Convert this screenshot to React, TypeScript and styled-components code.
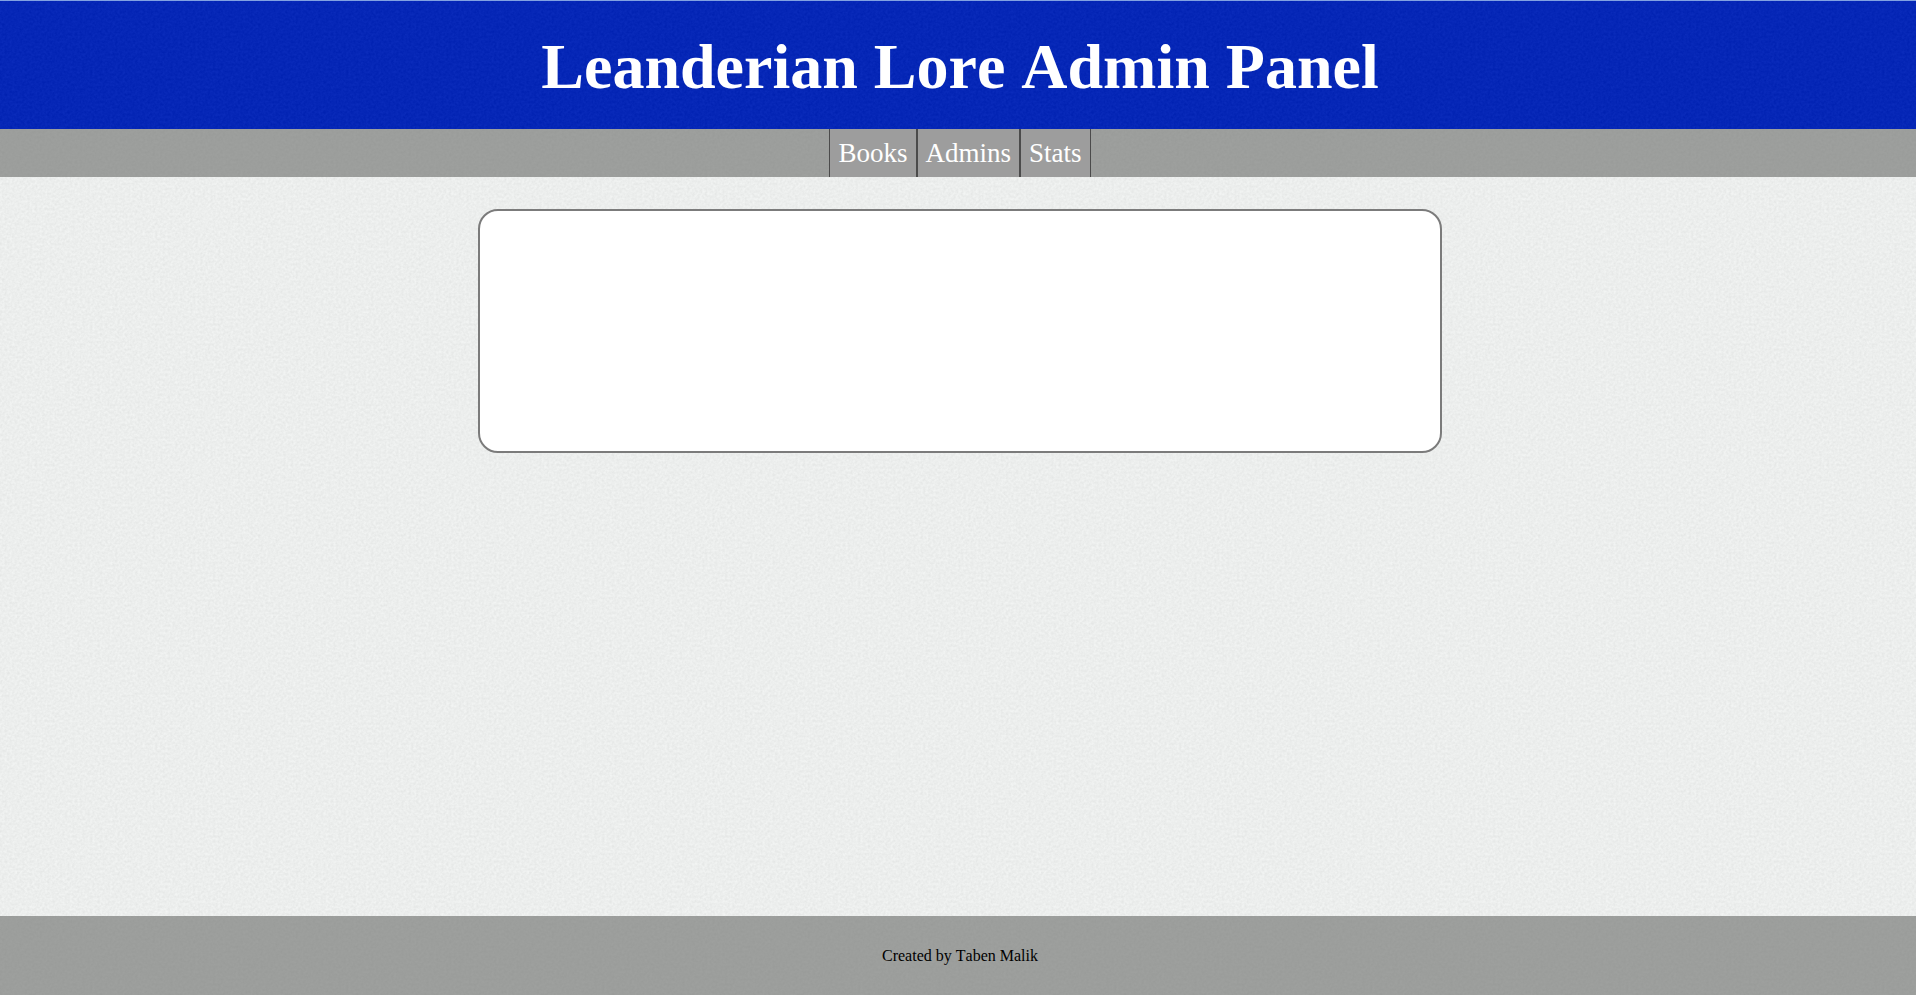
import React from 'react';
import styled, { createGlobalStyle } from 'styled-components';

// Repeating speckle that gives every surface its paper grain.
const grain = (opacity: number) =>
  `url("data:image/svg+xml,${encodeURIComponent(
    `<svg xmlns='http://www.w3.org/2000/svg' width='256' height='256'><filter id='n' x='0' y='0' width='100%' height='100%' color-interpolation-filters='sRGB'><feTurbulence type='fractalNoise' baseFrequency='0.4' numOctaves='2' stitchTiles='stitch'/><feColorMatrix type='saturate' values='0'/><feComponentTransfer><feFuncR type='linear' slope='2' intercept='-0.5'/><feFuncG type='linear' slope='2' intercept='-0.5'/><feFuncB type='linear' slope='2' intercept='-0.5'/><feFuncA type='linear' slope='0' intercept='1'/></feComponentTransfer></filter><rect width='256' height='256' filter='url(#n)' opacity='${opacity}'/></svg>`
  )}")`;

const GlobalStyle = createGlobalStyle`
  *, *::before, *::after { box-sizing: border-box; }
  body {
    margin: 0;
    font-family: 'Liberation Serif', 'Times New Roman', serif;
    font-size: 16px;
    font-kerning: none;
    color: #000;
  }
`;

const Page = styled.div`
  display: flex;
  flex-direction: column;
  min-height: 100vh;
  background: ${grain(0.05)} #f1f3f2;
`;

const Header = styled.header`
  padding: 30px 0 26px 4px;
  border-top: 1px solid #82a2e2;
  background: ${grain(0.04)} #0022b8;
  text-align: center;
`;

const Title = styled.h1`
  margin: 0;
  font-size: 64px;
  line-height: 72px;
  color: #fff;
`;

const Nav = styled.nav`
  padding-left: 4px;
  background: ${grain(0.02)} #9c9e9c;
`;

const NavList = styled.ul`
  display: flex;
  justify-content: center;
  margin: 0;
  padding: 0;
  list-style: none;
`;

const NavLink = styled.a`
  display: block;
  padding: 0 8px;
  border: solid #4b4b4b;
  border-width: 0 1px;
  background: #9d9d9d;
  font-size: 27px;
  line-height: 48px;
  color: #fff;
  text-decoration: none;
`;

const Main = styled.main`
  display: flex;
  flex: 1;
  justify-content: center;
  align-items: flex-start;
  padding: 32px 0 32px 4px;
`;

const Panel = styled.section`
  width: calc(50% + 8px);
  min-height: 244px;
  border: 2px solid #7b7b7b;
  border-radius: 20px;
  background: #fff;
`;

const Footer = styled.footer`
  padding: 30px 0 29px 4px;
  background: ${grain(0.02)} #9c9e9c;
  line-height: 20px;
  text-align: center;
`;

const links = ['Books', 'Admins', 'Stats'];

export default function App() {
  return (
    <>
      <GlobalStyle />
      <Page>
        <Header>
          <Title>Leanderian Lore Admin Panel</Title>
        </Header>
        <Nav>
          <NavList>
            {links.map((label) => (
              <li key={label}>
                <NavLink href={`#${label.toLowerCase()}`}>{label}</NavLink>
              </li>
            ))}
          </NavList>
        </Nav>
        <Main>
          <Panel />
        </Main>
        <Footer>Created by Taben Malik</Footer>
      </Page>
    </>
  );
}
